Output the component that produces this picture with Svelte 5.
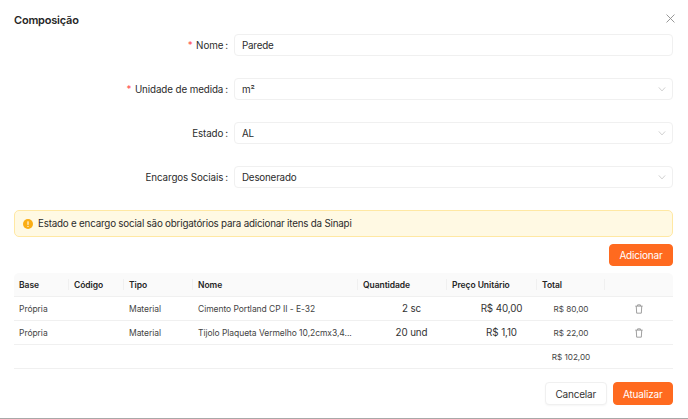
<script>
  const fields = [
    { label: 'Nome', value: 'Parede', required: true },
    { label: 'Unidade de medida', value: 'm²', required: true, select: true },
    { label: 'Estado', value: 'AL', select: true },
    { label: 'Encargos Sociais', value: 'Desonerado', select: true },
  ]

  const rows = [
    { base: 'Própria', tipo: 'Material', nome: 'Cimento Portland CP II - E-32', qtd: '2 sc', preco: 'R$ 40,00', total: 'R$ 80,00' },
    { base: 'Própria', tipo: 'Material', nome: 'Tijolo Plaqueta Vermelho 10,2cmx3,4...', qtd: '20 und', preco: 'R$ 1,10', total: 'R$ 22,00' },
  ]

  const columns = ['Base', 'Código', 'Tipo', 'Nome', 'Quantidade', 'Preço Unitário', 'Total', '']
</script>

<div class="modal">
  <header>
    <h2>Composição</h2>
    <button class="close" aria-label="Fechar">
      <svg viewBox="0 0 10 10" width="9" height="9"><path d="M.6.6l8.8 8.8M9.4.6L.6 9.4" /></svg>
    </button>
  </header>

  <div class="form">
    {#each fields as field}
      <div class="field">
        <div class="label">
          {#if field.required}<span class="req">*</span>{/if}
          <span>{field.label}</span><span class="colon">:</span>
        </div>
        <div class="control">
          <span>{field.value}</span>
          {#if field.select}
            <svg class="chevron" viewBox="0 0 10 10" width="8" height="8"><path d="M1 3l4 4.4L9 3" /></svg>
          {/if}
        </div>
      </div>
    {/each}
  </div>

  <div class="alert">
    <svg viewBox="0 0 12 12" width="10" height="10">
      <circle cx="6" cy="6" r="6" fill="#faad14" />
      <rect x="5.35" y="2.6" width="1.3" height="4.6" rx=".5" fill="#fff" />
      <circle cx="6" cy="8.8" r=".8" fill="#fff" />
    </svg>
    <span>Estado e encargo social são obrigatórios para adicionar itens da Sinapi</span>
  </div>

  <div class="toolbar">
    <button class="btn primary add">Adicionar</button>
  </div>

  <table>
    <colgroup>
      <col style="width: 55px" />
      <col style="width: 55px" />
      <col style="width: 69px" />
      <col style="width: 165px" />
      <col style="width: 89px" />
      <col style="width: 90px" />
      <col style="width: 68px" />
      <col style="width: 68px" />
    </colgroup>
    <thead>
      <tr>
        {#each columns as col}
          <th>{col}</th>
        {/each}
      </tr>
    </thead>
    <tbody>
      {#each rows as row}
        <tr>
          <td>{row.base}</td>
          <td></td>
          <td>{row.tipo}</td>
          <td>{row.nome}</td>
          <td class="big qtd">{row.qtd}</td>
          <td class="big price">{row.preco}</td>
          <td class="center money">{row.total}</td>
          <td class="center">
            <svg class="trash" viewBox="0 0 10 12" width="8" height="10">
              <path d="M.4 2.4h9.2M3.3 2.2V.8h3.4v1.4M1.6 2.6l.5 8.6h5.8l.5-8.6" />
            </svg>
          </td>
        </tr>
      {/each}
      <tr>
        <td></td><td></td><td></td><td></td><td></td><td></td>
        <td class="center money">R$ 102,00</td>
        <td></td>
      </tr>
    </tbody>
  </table>

  <footer>
    <button class="btn cancel">Cancelar</button>
    <button class="btn primary">Atualizar</button>
  </footer>
</div>

<style>
  :global(body) {
    background: #fff;
  }

  .modal {
    box-sizing: border-box;
    height: 419px;
    padding: 0 15px 0 14px;
    border-bottom: 1px solid #a8a8a8;
    font-family: Inter, "Noto Sans", sans-serif;
    font-size: 9.8px;
    letter-spacing: -0.2px;
    color: #2b2b2b;
    overflow: hidden;
  }

  header {
    display: flex;
    justify-content: space-between;
    height: 34px;
  }

  h2 {
    margin: 13px 0 0;
    font-size: 11px;
    line-height: 15px;
    font-weight: 600;
    letter-spacing: -0.2px;
    color: #262626;
  }

  .close {
    width: 9px;
    height: 9px;
    margin: 13.5px -2px 0 0;
    padding: 0;
    border: none;
    background: none;
  }

  .close svg {
    display: block;
    fill: none;
    stroke: #8c8c8c;
    stroke-width: 1;
  }

  .form {
    display: flex;
    flex-direction: column;
    gap: 22px;
  }

  .field {
    display: flex;
    align-items: center;
    height: 22px;
  }

  .label {
    box-sizing: border-box;
    width: 220px;
    padding-right: 6px;
    text-align: right;
    letter-spacing: -0.1px;
    color: #2b2b2b;
  }

  .req {
    color: #ff4d4f;
    margin-right: 1px;
  }

  .colon {
    margin-left: 2px;
  }

  .control {
    box-sizing: border-box;
    flex: 1;
    display: flex;
    justify-content: space-between;
    align-items: center;
    height: 22px;
    padding: 0 7px;
    border: 1px solid #f0f0f0;
    border-radius: 4px;
  }

  .chevron {
    fill: none;
    stroke: #c4c4c4;
    stroke-width: 1;
    margin-right: -1px;
  }

  .alert {
    display: flex;
    align-items: center;
    gap: 5px;
    box-sizing: border-box;
    height: 27px;
    margin-top: 22px;
    padding: 0 8px;
    background: #fff9e3;
    border: 1px solid #ffe8a3;
    border-radius: 5px;
  }

  .toolbar {
    display: flex;
    justify-content: flex-end;
    margin-top: 7px;
  }

  .btn {
    box-sizing: border-box;
    height: 23px;
    padding: 0 9.5px;
    border: 1px solid #f0f0f0;
    border-radius: 4px;
    background: #fff;
    font-family: inherit;
    font-size: 10px;
    letter-spacing: -0.2px;
    color: #333;
  }

  .cancel {
    box-shadow: 0 1px 2px rgba(0, 0, 0, 0.04);
  }

  .primary {
    background: #ff6a1f;
    border-color: #ff6a1f;
    color: #fff;
  }

  .add {
    height: 22px;
  }

  table {
    table-layout: fixed;
    width: 659px;
    margin-top: 7px;
    border-collapse: separate;
    border-spacing: 0;
    font-size: 8.5px;
    letter-spacing: -0.05px;
  }

  th {
    position: relative;
    box-sizing: border-box;
    height: 24px;
    padding: 0 5px;
    background: #fafafa;
    border-bottom: 1px solid #f0f0f0;
    text-align: left;
    font-weight: 600;
    color: #262626;
  }

  th:first-child {
    border-top-left-radius: 5px;
  }

  th:last-child {
    border-top-right-radius: 5px;
  }

  th:not(:last-child)::after {
    content: '';
    position: absolute;
    right: 0;
    top: 6px;
    bottom: 6px;
    width: 1px;
    background: #f0f0f0;
  }

  td {
    box-sizing: border-box;
    height: 24px;
    padding: 0 5px;
    border-bottom: 1px solid #f0f0f0;
    white-space: nowrap;
    color: #444;
  }

  .big {
    font-size: 9.8px;
    letter-spacing: -0.1px;
    color: #333;
    text-align: center;
  }

  .qtd {
    padding-left: 23px;
  }

  .price {
    padding-left: 24px;
  }

  .center {
    text-align: center;
  }

  .money {
    font-size: 8.2px;
  }

  .trash {
    display: block;
    margin: 0 auto;
    fill: none;
    stroke: #7a7a7a;
    stroke-width: .9;
  }

  footer {
    display: flex;
    justify-content: flex-end;
    gap: 6px;
    margin-top: 13px;
  }
</style>
